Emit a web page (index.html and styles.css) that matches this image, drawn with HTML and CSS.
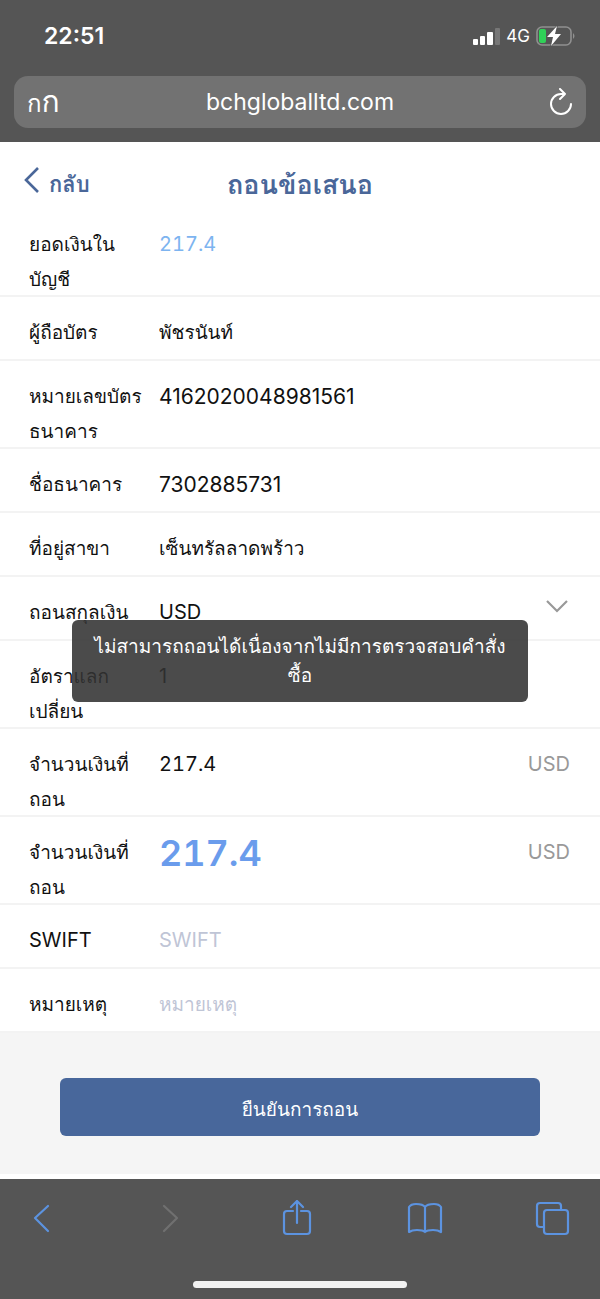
FILE: index.html
```html
<!DOCTYPE html>
<html lang="th">
<head>
<meta charset="utf-8">
<meta name="viewport" content="width=device-width, initial-scale=1">
<title>ถอนข้อเสนอ</title>
<link rel="stylesheet" href="styles.css">
</head>
<body>
<header class="browser-top">
  <div class="status">
    <time class="clock">22:51</time>
    <div class="status-icons">
      <svg width="27" height="17" viewBox="0 0 27 17" fill="#fff" aria-hidden="true"><rect x="0" y="11" width="5" height="6" rx="1"/><rect x="7" y="8" width="5" height="9" rx="1"/><rect x="14" y="4" width="6" height="13" rx="1"/><rect x="22" y="0" width="5" height="17" rx="1" fill="#777"/></svg>
      <span>4G</span>
      <svg width="40" height="20" viewBox="0 0 40 20" aria-hidden="true"><rect x="1" y="1" width="34" height="18" rx="5" fill="none" stroke="#909090" stroke-width="1.6"/><path d="M37 7q3 3 0 6z" fill="#909090"/><rect x="3" y="3" width="7" height="14" rx="2" fill="#30d158"/><path d="M21 0 11 11h6l-2 9 10-12h-6z" fill="#fff" stroke="#555" stroke-width="1.4" stroke-linejoin="round" paint-order="stroke"/></svg>
    </div>
  </div>
  <div class="address">
    <button class="text-size" type="button">ก<span>ก</span></button>
    <span class="domain">bchgloballtd.com</span>
    <button class="reload" type="button" aria-label="โหลดซ้ำ"><svg width="24" height="28" viewBox="0 0 24 28" fill="none" stroke="#fff" stroke-width="2" stroke-linecap="round" stroke-linejoin="round"><path d="M22 16A10 10 0 1 1 12 6h4M11 1l5 5-5 5"/></svg></button>
  </div>
</header>
<main class="page">
  <div class="title-bar">
    <a class="back" href="#"><svg width="16" height="26" viewBox="0 0 16 26" fill="none" stroke="#4a6799" stroke-width="2.6"><path d="M14 1 2 13l12 12"/></svg><span>กลับ</span></a>
    <h1>ถอนข้อเสนอ</h1>
  </div>
  <form class="form" id="withdraw">
    <div class="row"><label for="balance">ยอดเงินในบัญชี</label><input class="money balance" id="balance" value="217.4" readonly></div>
    <div class="row"><label for="holder">ผู้ถือบัตร</label><input id="holder" value="พัชรนันท์"></div>
    <div class="row"><label for="card">หมายเลขบัตรธนาคาร</label><input class="number" id="card" value="4162020048981561"></div>
    <div class="row"><label for="bank">ชื่อธนาคาร</label><input class="number" id="bank" value="7302885731"></div>
    <div class="row"><label for="branch">ที่อยู่สาขา</label><input id="branch" value="เซ็นทรัลลาดพร้าว"></div>
    <div class="row"><label for="currency">ถอนสกุลเงิน</label><select class="latin" id="currency"><option>USD</option></select><svg class="chevron" width="22" height="13" viewBox="0 0 22 13" fill="none" stroke="#999" stroke-width="2.2"><path d="m1 1 10 10L21 1"/></svg></div>
    <div class="row"><label for="rate">อัตราแลกเปลี่ยน</label><input class="latin" id="rate" value="1" readonly></div>
    <div class="row"><label for="amount">จำนวนเงินที่ถอน</label><input class="money" id="amount" value="217.4"><span class="unit latin">USD</span></div>
    <div class="row"><label for="total">จำนวนเงินที่ถอน</label><input class="money total" id="total" value="217.4" readonly><span class="unit latin">USD</span></div>
    <div class="row"><label class="latin" for="swift">SWIFT</label><input class="latin" id="swift" placeholder="SWIFT"></div>
    <div class="row"><label for="note">หมายเหตุ</label><input id="note" placeholder="หมายเหตุ"></div>
  </form>
  <div class="actions"><button class="confirm" type="submit" form="withdraw">ยืนยันการถอน</button></div>
  <div class="toast" role="alert">ไม่สามารถถอนได้เนื่องจากไม่มีการตรวจสอบคำสั่งซื้อ</div>
</main>
<footer class="browser-bottom">
  <nav class="tools">
    <button type="button" aria-label="ย้อนกลับ"><svg width="36" height="36" viewBox="0 0 36 36"><path d="M24 6 11 18l13 13"/></svg></button>
    <button type="button" aria-label="ไปข้างหน้า" disabled><svg width="36" height="36" viewBox="0 0 36 36"><path d="m12 6 13 12-13 13"/></svg></button>
    <button type="button" aria-label="แชร์"><svg width="36" height="36" viewBox="0 0 36 36"><path d="M14 11H8q-3 0-3 3v17q0 3 3 3h20q3 0 3-3V14q0-3-3-3h-6M18 23V1M12 7l6-6 6 6"/></svg></button>
    <button type="button" aria-label="บุ๊กมาร์ก"><svg width="36" height="36" viewBox="0 0 36 36"><path d="M18 7Q16 4 9 4 4 4 2 7v25q3-2 8-2 6 0 8 2 2-2 8-2 5 0 8 2V7q-2-3-7-3-7 0-9 3zv25"/></svg></button>
    <button type="button" aria-label="แท็บ"><svg width="36" height="36" viewBox="0 0 36 36"><path d="M10 27H6q-3 0-3-3V6q0-3 3-3h18q3 0 3 3v4"/><rect x="10" y="10" width="24" height="24" rx="3"/></svg></button>
  </nav>
  <div class="home-bar"></div>
</footer>
</body>
</html>
```
FILE: styles.css
```css
* { box-sizing: border-box; }

body {
  margin: 0;
  min-height: 100vh;
  display: flex;
  flex-direction: column;
  background: #fff;
  color: #111;
  font: 19px/35px Inter, Loma, Waree, Garuda, "Noto Sans Thai Looped", "Noto Sans Thai", "Noto Sans", sans-serif;
}

button, input, select {
  margin: 0;
  padding: 0;
  border: 0;
  background: none;
  color: inherit;
  font: inherit;
}

svg { display: block; flex: none; }

.row .latin { font-size: 20px; }
.row .number { font-size: 21px; }

.browser-top {
  padding: 18px 14px 14px;
  background: #555;
  color: #fff;
}

.status {
  display: flex;
  justify-content: space-between;
  align-items: center;
  height: 36px;
  padding: 0 10px 0 30px;
}

.clock { font-size: 23px; font-weight: 600; }

.status-icons {
  display: flex;
  align-items: center;
  gap: 6px;
  font-size: 17px;
}

.address {
  display: grid;
  grid-template-columns: 1fr auto 1fr;
  align-items: center;
  height: 52px;
  margin-top: 22px;
  padding: 0 13px;
  border-radius: 14px;
  background: #727272;
}

.text-size { justify-self: start; font-size: 24px; }
.text-size span { font-size: 30px; }
.domain { font-size: 23px; }
.reload { justify-self: end; }

.page {
  position: relative;
  flex: 1;
  display: flex;
  flex-direction: column;
}

.title-bar {
  display: grid;
  grid-template-columns: 1fr auto 1fr;
  align-items: center;
  height: 67px;
  padding: 18px 24px 0;
  color: #4a6799;
}

.title-bar h1 { margin: 0; font-size: 27px; font-weight: 600; }

.back {
  display: flex;
  align-items: flex-start;
  gap: 9px;
  color: inherit;
  font-size: 22px;
  font-weight: 600;
  text-decoration: none;
}

.row {
  display: grid;
  grid-template-columns: 115px 1fr auto;
  column-gap: 15px;
  align-items: start;
  align-content: start;
  min-height: 64px;
  padding: 18px 30px 0 29px;
  border-bottom: 2px solid #f3f3f3;
}

.row label { margin-bottom: -2px; }

.row input, .row select {
  width: 100%;
  min-width: 0;
  height: 35px;
  line-height: 35px;
  appearance: none;
  outline: 0;
}

.row input::placeholder { color: #bfc5d6; opacity: 1; }
.row .money { font-size: 20px; font-variant-numeric: tabular-nums; }
.row .balance { color: #7db4f0; }
.row .total { color: #6a9cec; font-size: 36px; font-weight: 600; }
.unit { color: #999; }
.chevron { margin: 5px 2px 0 0; }

.actions {
  flex: 1;
  padding: 45px 60px 38px;
  border-bottom: 5px solid #fff;
  background: #f5f5f5;
}

.confirm {
  display: block;
  width: 100%;
  height: 58px;
  padding-top: 5px;
  border-radius: 6px;
  background: #48679b;
  color: #fff;
}

.toast {
  position: absolute;
  top: 50%;
  left: 12%;
  right: 12%;
  transform: translateY(-50%);
  padding: 12px 18px;
  border-radius: 6px;
  background: rgba(50, 50, 50, 0.88);
  color: #fff;
  line-height: 29px;
  text-align: center;
}

.browser-bottom {
  padding: 21px 24px 12px;
  background: #555;
}

.tools {
  display: flex;
  justify-content: space-between;
  padding-right: 6px;
}

.tools button { color: #5c93e0; }
.tools button:disabled { color: #707070; }

.tools svg {
  fill: none;
  stroke: currentColor;
  stroke-width: 2.2;
  stroke-linecap: round;
  stroke-linejoin: round;
}

.home-bar {
  width: 214px;
  height: 7px;
  margin: 45px auto 0;
  border-radius: 4px;
  background: #f2f2f2;
}
```
